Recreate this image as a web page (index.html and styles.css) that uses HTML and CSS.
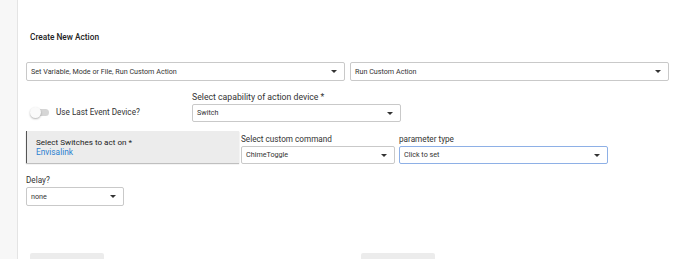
FILE: index.html
```html
<!DOCTYPE html>
<html lang="en">
<head>
    <meta charset="UTF-8">
    <title>Create New Action</title>
    <link rel="stylesheet" href="styles.css">
</head>
<body>
    <div class="sidebar"></div>

    <div class="main">
        <h3 class="title">Create New Action</h3>

        <!-- action type -->
        <div class="row row-top">
            <div class="select wide">Set Variable, Mode or File, Run Custom Action<span class="caret"></span></div>
            <div class="select wide">Run Custom Action<span class="caret"></span></div>
        </div>

        <!-- capability -->
        <div class="row row-cap">
            <div class="toggle-wrap">
                <span class="toggle"><span class="knob"></span></span>
                <span class="toggle-label">Use Last Event Device?</span>
            </div>
            <div class="field cap">
                <label>Select capability of action device *</label>
                <div class="select">Switch<span class="caret"></span></div>
            </div>
        </div>

        <!-- device + command -->
        <div class="row row-dev">
            <div class="device-box">
                <div class="device-title">Select Switches to act on *</div>
                <div class="device-name">Envisalink</div>
            </div>
            <div class="field cmd">
                <label>Select custom command</label>
                <div class="select">ChimeToggle<span class="caret"></span></div>
            </div>
            <div class="field param">
                <label>parameter type</label>
                <div class="select focus">Click to set<span class="caret"></span></div>
            </div>
        </div>

        <!-- delay -->
        <div class="field delay">
            <label>Delay?</label>
            <div class="select">none<span class="caret"></span></div>
        </div>

        <div class="buttons">
            <div class="btn btn-left"></div>
            <div class="btn btn-right"></div>
        </div>
    </div>
</body>
</html>
```

FILE: styles.css
```css
body {
    margin: 0;
    font-family: Roboto, "Liberation Sans", sans-serif;
    color: #222;
    background: #fff;
    display: flex;
    height: 259px;
    overflow: hidden;
}

.sidebar {
    width: 17px;
    flex: none;
    background: #f7f7f7;
    border-right: 1px solid #e4e4e4;
}

.main {
    flex: 1;
    padding: 31px 0 0 8px;
}

.title {
    margin: 0 0 0 4px;
    font-size: 8.3px;
    font-weight: 500;
    line-height: 12px;
}

.row {
    display: flex;
}

.row-top {
    margin-top: 19px;
    gap: 5px;
}

.select {
    position: relative;
    box-sizing: border-box;
    height: 19px;
    border: 1px solid #c9c9c9;
    border-radius: 2px;
    font-size: 7.2px;
    line-height: 17px;
    padding-left: 4px;
    color: #333;
    background: #fff;
}

.select.wide {
    width: 319px;
}

.select.focus {
    border-color: #8eb0e6;
}

.caret {
    position: absolute;
    right: 7px;
    top: 7px;
    width: 0;
    height: 0;
    border-left: 3px solid transparent;
    border-right: 3px solid transparent;
    border-top: 3px solid #333;
}

.row-cap {
    margin-top: 11px;
    align-items: flex-end;
}

.toggle-wrap {
    width: 162px;
    display: flex;
    align-items: center;
    padding-left: 4px;
    margin-bottom: 5px;
}

.toggle {
    position: relative;
    width: 17px;
    height: 7px;
    border-radius: 4px;
    background: #d6d6d6;
    margin-right: 7px;
    margin-left: 2px;
}

.knob {
    position: absolute;
    left: -2px;
    top: -2px;
    width: 11px;
    height: 11px;
    border-radius: 50%;
    background: #fafafa;
    box-shadow: 0 1px 2px rgba(0, 0, 0, 0.3);
}

.toggle-label {
    font-size: 8.2px;
    color: #333;
}

.field label {
    display: block;
    font-size: 8.2px;
    color: #333;
    line-height: 11px;
    margin-bottom: 1px;
}

.cap {
    width: 209px;
}

.cap label {
    font-size: 8.7px;
}

.cap .select {
    height: 18px;
    line-height: 16px;
}

.row-dev {
    margin-top: 9px;
    align-items: flex-start;
}

.device-box {
    box-sizing: border-box;
    width: 213px;
    height: 32px;
    background: #ececec;
    border-left: 1px solid #555;
    box-shadow: 0 1px 1px rgba(0, 0, 0, 0.25);
    padding: 6px 0 0 9px;
    margin-right: 2px;
}

.device-title {
    font-size: 8.1px;
    line-height: 10px;
    color: #222;
}

.device-name {
    font-size: 8.3px;
    line-height: 11px;
    color: #2a7fd0;
}

.cmd {
    width: 154px;
    margin-top: 3px;
    margin-right: 4px;
}

.param {
    width: 209px;
    margin-top: 3px;
}

.cmd .select,
.param .select {
    height: 18px;
    line-height: 16px;
}

.delay {
    margin-top: 11px;
    width: 98px;
}

.delay .select {
    height: 19px;
}

.buttons {
    display: flex;
    margin-top: 47px;
    padding-left: 4px;
}

.btn {
    width: 74px;
    height: 12px;
    background: #ececec;
    border-radius: 2px;
}

.btn-left {
    margin-right: 257px;
}
```
